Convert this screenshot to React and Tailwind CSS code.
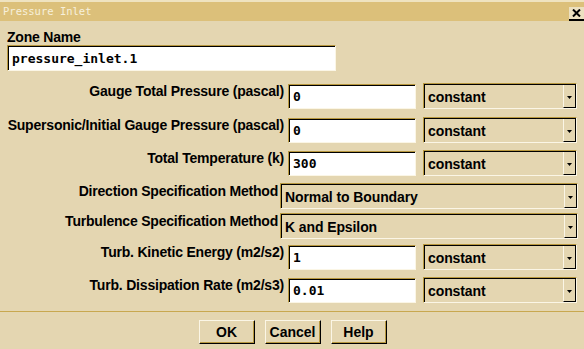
const SANS = "font-['Liberation_Sans',Arial,sans-serif]"
const MONO = "font-['DejaVu_Sans_Mono','Liberation_Mono',monospace]"

const ROWS = [
  { label: 'Gauge Total Pressure (pascal)', value: '0', method: 'constant', mt: 'mt-[12px]' },
  { label: 'Supersonic/Initial Gauge Pressure (pascal)', value: '0', method: 'constant', mt: 'mt-[8px]' },
  { label: 'Total Temperature (k)', value: '300', method: 'constant', mt: 'mt-[7px]' },
  { label: 'Direction Specification Method', method: 'Normal to Boundary', mt: 'mt-[7px]', wide: true },
  { label: 'Turbulence Specification Method', method: 'K and Epsilon', mt: 'mt-[4px]', wide: true },
  { label: 'Turb. Kinetic Energy (m2/s2)', value: '1', method: 'constant', mt: 'mt-[5px]' },
  { label: 'Turb. Dissipation Rate (m2/s3)', value: '0.01', method: 'constant', mt: 'mt-[7px]' },
]

function TextField({ value, className }) {
  return (
    <div className={`flex items-center bg-white border border-t-[#b8983f] border-l-[#b8983f] border-b-[#fbf6e6] border-r-[#fbf6e6] shadow-[inset_1px_1px_0_#000] pl-[4px] ${className}`}>
      <span className={`${MONO} font-bold text-[13px] text-black leading-none`}>{value}</span>
    </div>
  )
}

function Dropdown({ value, className }) {
  return (
    <div className={`flex items-stretch bg-[#e4d6b1] border border-t-[#b8983f] border-l-[#b8983f] border-b-[#fbf6e6] border-r-[#fbf6e6] shadow-[inset_1px_1px_0_#000] ${className}`}>
      <div className="flex-1 flex items-center pl-[4px] pt-[1px]">
        <span className={`${SANS} font-bold text-[14px] tracking-[-0.1px] text-black leading-none`}>{value}</span>
      </div>
      <div className="w-[13px] mt-[1px] flex items-center justify-center bg-[#e4d6b1] border-l border-l-[#fbf6e6] border-r border-r-black border-b border-b-black">
        <svg width="5" height="3" viewBox="0 0 5 3" className="mt-[3px]">
          <path d="M0 0h5L2.5 3z" fill="#000" />
        </svg>
      </div>
    </div>
  )
}

function Button({ children }) {
  return (
    <div className={`w-[56px] h-[24px] flex items-center justify-center bg-[#e4d6b1] border border-t-[#fbf6e6] border-l-[#fbf6e6] border-b-black border-r-black shadow-[inset_-1px_-1px_0_#b8983f] ${SANS} font-bold text-[14px] text-black`}>
      {children}
    </div>
  )
}

export default function App() {
  return (
    <div className={`w-[584px] h-[349px] bg-[#e4d6b1] flex flex-col overflow-hidden ${SANS}`}>
      {/* Title bar */}
      <div className="h-[21px] shrink-0 border-t-[2px] border-[#efe3c0] bg-[#dcc07a] flex items-center justify-between pl-[3px]">
        <span className={`${MONO} text-[10.5px] text-[#f7f0dc] leading-none`}>Pressure Inlet</span>
        <div className="w-[15px] h-[14px] mt-[4px] bg-[#ece0c0] border-b-2 border-black flex items-center justify-center">
          <svg width="9" height="8" viewBox="0 0 9 8">
            <path d="M1 0.5l7 7M8 0.5l-7 7" stroke="#000" strokeWidth="2" />
          </svg>
        </div>
      </div>

      {/* Zone name */}
      <div className="pl-[7px] mt-[9px]">
        <div className="font-bold text-[14px] tracking-[-0.2px] leading-[15px] text-black">Zone Name</div>
        <TextField value="pressure_inlet.1" className="w-[329px] h-[26px]" />
      </div>

      {/* Parameter rows */}
      {ROWS.map(row => (
        <div key={row.label} className={`flex items-center h-[26px] ${row.mt}`}>
          {row.wide ? (
            <>
              <div className="w-[278px] text-right font-bold text-[14px] tracking-[-0.2px] text-black leading-none pb-[10px]">{row.label}</div>
              <Dropdown value={row.method} className="ml-[2px] w-[298px] h-[26px]" />
            </>
          ) : (
            <>
              <div className="w-[284px] text-right font-bold text-[14px] tracking-[-0.2px] text-black leading-none pb-[10px]">{row.label}</div>
              <TextField value={row.value} className="ml-[4px] w-[128px] h-[25px]" />
              <Dropdown value={row.method} className="ml-[7px] w-[154px] h-[26px]" />
            </>
          )}
        </div>
      ))}

      {/* Separator */}
      <div className="mt-[8px] h-px bg-[#c8a850]" />

      {/* Buttons */}
      <div className="flex justify-center gap-[10px] mt-[8px] pl-[1px]">
        <Button>OK</Button>
        <Button>Cancel</Button>
        <Button>Help</Button>
      </div>
    </div>
  )
}
